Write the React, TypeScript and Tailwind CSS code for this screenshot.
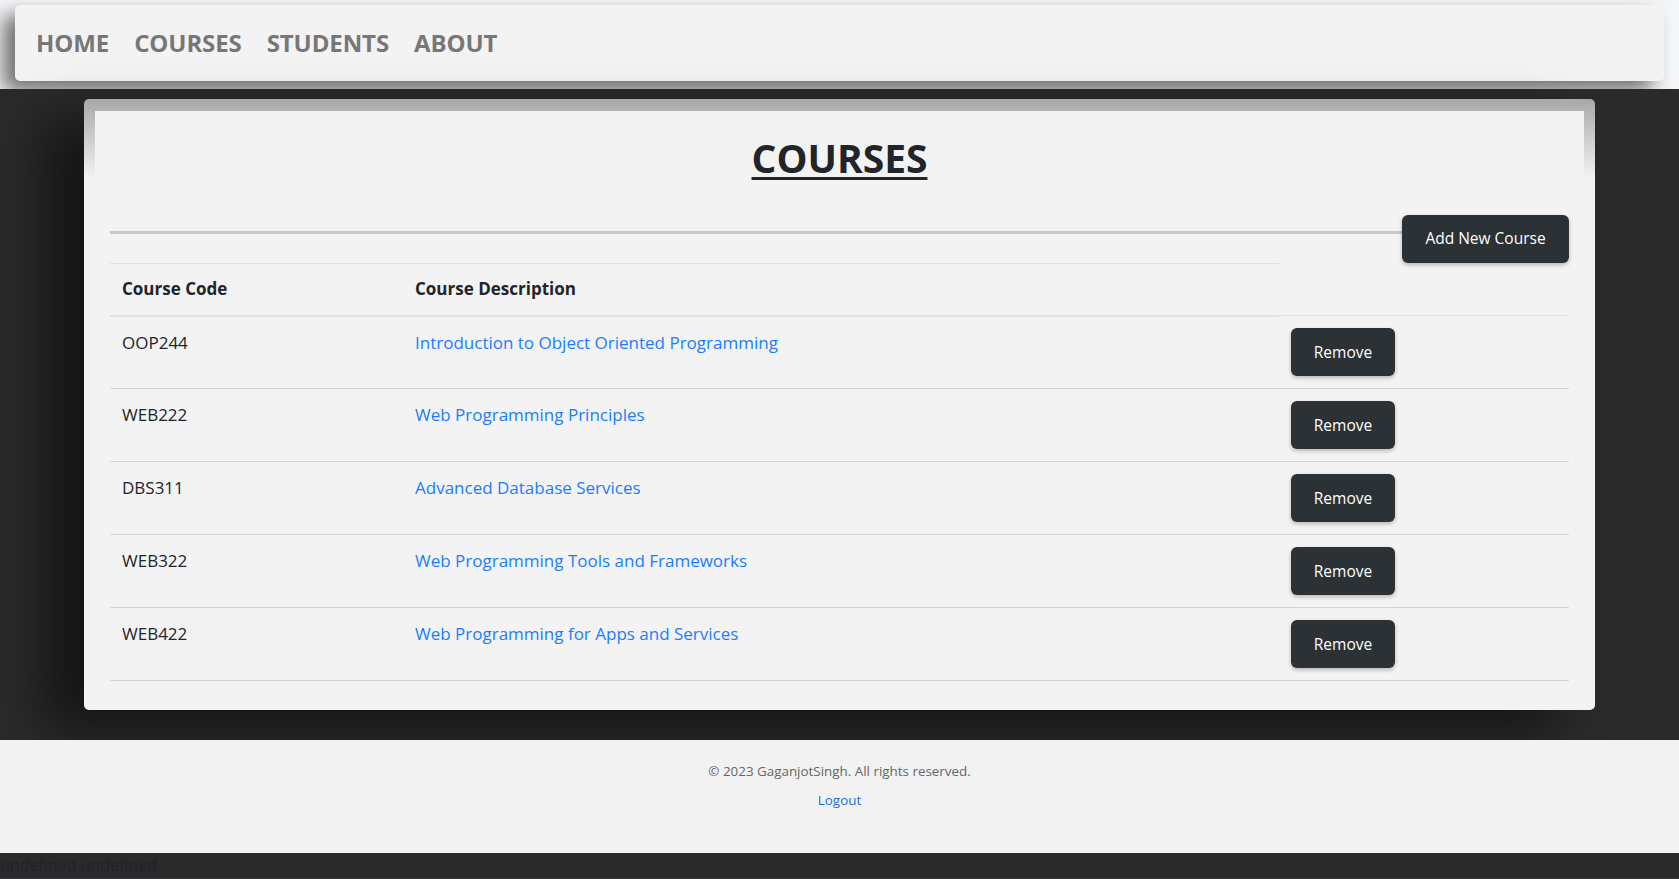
const courses = [
	{ code: "OOP244", name: "Introduction to Object Oriented Programming" },
	{ code: "WEB222", name: "Web Programming Principles" },
	{ code: "DBS311", name: "Advanced Database Services" },
	{ code: "WEB322", name: "Web Programming Tools and Frameworks" },
	{ code: "WEB422", name: "Web Programming for Apps and Services" },
];

const App = () => {
	const links = ["HOME", "COURSES", "STUDENTS", "ABOUT"];

	return (
		<div className="bg-[#2a2a2a] font-['Open_Sans','Liberation_Sans',sans-serif] text-[#212529]">
			<header className="h-[89px] bg-[#f5f6f8] pt-[5px] px-[15px]">
				<nav className="h-[76px] rounded-[5px] bg-[#f3f3f3] shadow-[-12px_10px_20px_rgba(0,0,0,0.55)] flex items-center gap-[25px] pl-[21px]">
					{links.map((link) => (
						<a key={link} href="#" className="text-[24px] font-bold tracking-[-0.1px] text-[#777777]">
							{link}
						</a>
					))}
				</nav>
			</header>

			<main className="bg-[#2a2a2a] pt-[10px] pb-[30px]">
				<div className="mx-auto w-[1511px] rounded-[5px] bg-[linear-gradient(#a8a8a8,#f3f3f3_80px)] px-[11px] pt-[12px] shadow-[-40px_20px_50px_rgba(0,0,0,0.5)]">
					<div className="bg-[#f3f3f3] px-[15px] pb-[12px]">
						<h1 className="pt-[24px] text-center text-[39px] leading-[1.2] font-bold underline decoration-[3px] underline-offset-[4px]">
							COURSES
						</h1>

						<div className="mt-[33px] flex items-start">
							<div className="mt-[16px] h-[3px] flex-1 bg-[#c8c8c8]" />
							<button className="h-[48px] w-[167px] rounded-md bg-[#2c3136] text-[15.5px] text-white shadow-[0_2px_4px_rgba(0,0,0,0.25)]">
								Add New Course
							</button>
						</div>

						<table className="mb-[17px] w-full table-fixed text-[17px]">
							<colgroup>
								<col className="w-[293px]" />
								<col className="w-[876px]" />
								<col />
							</colgroup>
							<thead>
								<tr>
									<th className="border-t border-b-2 border-[#dee2e6] px-[12px] pt-[12px] pb-[13px] text-left font-bold leading-[26px]">
										Course Code
									</th>
									<th className="border-t border-b-2 border-[#dee2e6] px-[12px] pt-[12px] pb-[13px] text-left font-bold leading-[26px]">
										Course Description
									</th>
								</tr>
							</thead>
							<tbody>
								{courses.map((course, index) => (
									<tr key={course.code}>
										<td
											className={`border-b border-[#d4d4d4] px-[12px] pt-[13px] pb-[11px] align-top leading-[26px] ${index === 0 ? "border-t border-t-[#dee2e6]" : ""}`}
										>
											{course.code}
										</td>
										<td
											className={`border-b border-[#d4d4d4] px-[12px] pt-[13px] pb-[11px] align-top leading-[26px] ${index === 0 ? "border-t border-t-[#dee2e6]" : ""}`}
										>
											<a href="#" className="text-[#1a7dff]">
												{course.name}
											</a>
										</td>
										<td
											className={`border-b border-[#d4d4d4] px-[12px] py-[12px] align-top ${index === 0 ? "border-t border-t-[#dee2e6]" : ""}`}
										>
											<button className="block h-[48px] w-[104px] rounded-md bg-[#2c3136] text-[15.5px] text-white shadow-[0_2px_4px_rgba(0,0,0,0.25)]">
												Remove
											</button>
										</td>
									</tr>
								))}
							</tbody>
						</table>
					</div>
				</div>
			</main>

			<footer className="h-[113px] bg-[#f2f2f2] pt-[21px] text-center">
				<p className="text-[13.4px] leading-[20px] text-[#666666]">
					© 2023 GaganjotSingh. All rights reserved.
				</p>
				<a href="#" className="mt-[9px] inline-block text-[13.4px] leading-[20px] text-[#1a6fe0]">
					Logout
				</a>
			</footer>

			<div className="h-[26px] border-b border-[#38343f] bg-[#2a2a2a] text-[16px] leading-[24px] text-[#1f2328]">
				undefined undefined
			</div>
		</div>
	);
};

export default App;
